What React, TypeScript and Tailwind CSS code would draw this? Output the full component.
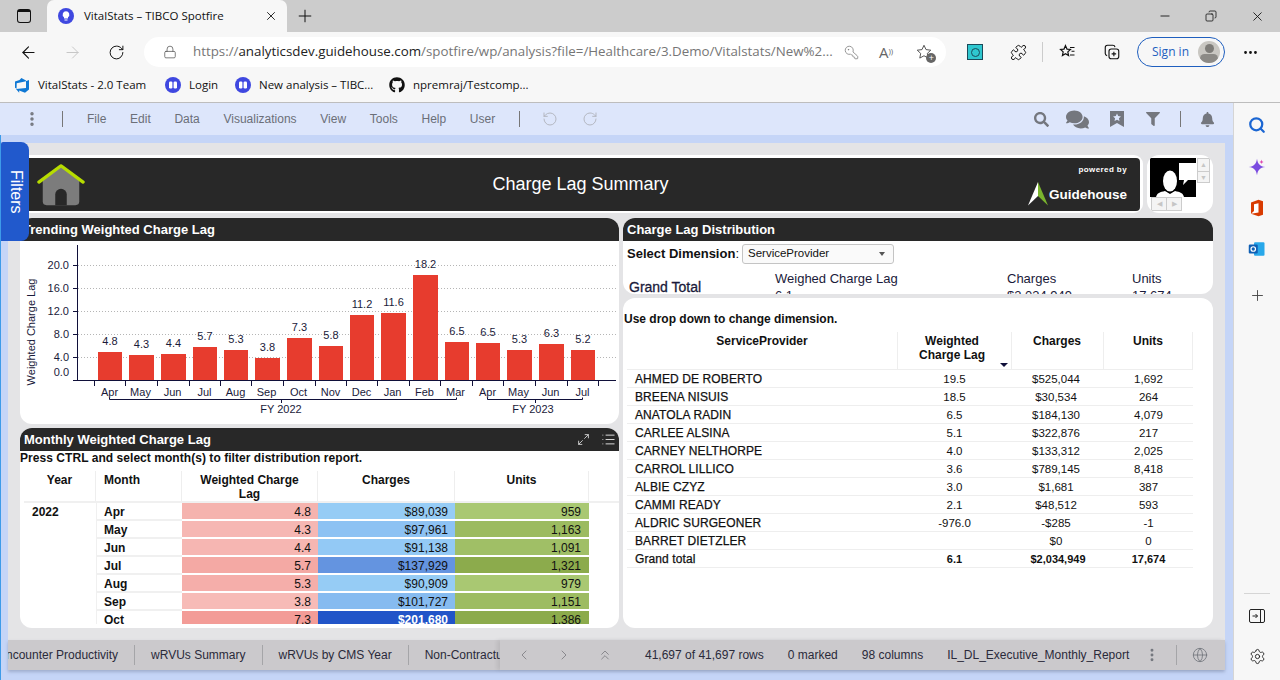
import { ArrowLeft, ArrowRight, ChevronLeft, ChevronRight, ChevronsUp, Ellipsis, EllipsisVertical, Globe, KeyRound, Lock, Maximize2, Minus, Plus, Puzzle, RotateCcw, RotateCw, Search, Settings, Copy, X, List } from "lucide-react";
import { FaGithub, FaSearch, FaFilter, FaBell, FaComments } from "react-icons/fa";

const menus = ["File", "Edit", "Data", "Visualizations", "View", "Tools", "Help", "User"];

const bars = [
  { m: "Apr", v: "4.8", x: 98, w: 24, top: 352, tick: 94.5 },
  { m: "May", v: "4.3", x: 129, w: 25, top: 355, tick: 125.5 },
  { m: "Jun", v: "4.4", x: 161, w: 25, top: 354, tick: 157.5 },
  { m: "Jul", v: "5.7", x: 193, w: 24, top: 347, tick: 189.5 },
  { m: "Aug", v: "5.3", x: 224, w: 24, top: 350, tick: 220.5 },
  { m: "Sep", v: "3.8", x: 255, w: 25, top: 358, tick: 251.5 },
  { m: "Oct", v: "7.3", x: 287, w: 25, top: 338, tick: 283.5 },
  { m: "Nov", v: "5.8", x: 319, w: 24, top: 346, tick: 315.5 },
  { m: "Dec", v: "11.2", x: 350, w: 24, top: 315, tick: 346.5 },
  { m: "Jan", v: "11.6", x: 381, w: 25, top: 313, tick: 377.5 },
  { m: "Feb", v: "18.2", x: 413, w: 25, top: 275, tick: 409.5 },
  { m: "Mar", v: "6.5", x: 445, w: 24, top: 342, tick: 440.5 },
  { m: "Apr", v: "6.5", x: 476, w: 24, top: 343, tick: 472.5 },
  { m: "May", v: "5.3", x: 507, w: 25, top: 350, tick: 503.5 },
  { m: "Jun", v: "6.3", x: 539, w: 25, top: 344, tick: 535.5 },
  { m: "Jul", v: "5.2", x: 571, w: 24, top: 350, tick: 567.5 },
];

const yTicks = [
  { label: "20.0", y: 265 },
  { label: "16.0", y: 288 },
  { label: "12.0", y: 311 },
  { label: "8.0", y: 334 },
  { label: "4.0", y: 357 },
];

const months = [
  { m: "Apr", lag: "4.8", lagBg: "bg-[#f5b3ae]", ch: "$89,039", chBg: "bg-[#96ccf5]", un: "959", unBg: "bg-[#a9c872]" },
  { m: "May", lag: "4.3", lagBg: "bg-[#f6b7b3]", ch: "$97,961", chBg: "bg-[#8dc2f3]", un: "1,163", unBg: "bg-[#9cbb60]" },
  { m: "Jun", lag: "4.4", lagBg: "bg-[#f6b6b2]", ch: "$91,138", chBg: "bg-[#93c9f5]", un: "1,091", unBg: "bg-[#a0bf66]" },
  { m: "Jul", lag: "5.7", lagBg: "bg-[#f4a9a4]", ch: "$137,929", chBg: "bg-[#6494e0]", un: "1,321", unBg: "bg-[#8cab4c]" },
  { m: "Aug", lag: "5.3", lagBg: "bg-[#f5aeaa]", ch: "$90,909", chBg: "bg-[#96ccf5]", un: "979", unBg: "bg-[#a9c872]" },
  { m: "Sep", lag: "3.8", lagBg: "bg-[#f7bbb7]", ch: "$101,727", chBg: "bg-[#86bbf0]", un: "1,151", unBg: "bg-[#9dbc61]" },
  { m: "Oct", lag: "7.3", lagBg: "bg-[#f39c97]", ch: "$201,680", chBg: "bg-[#2154c8] text-white font-bold", un: "1,386", unBg: "bg-[#8cab4c]" },
];

const providers = [
  ["AHMED DE ROBERTO", "19.5", "$525,044", "1,692"],
  ["BREENA NISUIS", "18.5", "$30,534", "264"],
  ["ANATOLA RADIN", "6.5", "$184,130", "4,079"],
  ["CARLEE ALSINA", "5.1", "$322,876", "217"],
  ["CARNEY NELTHORPE", "4.0", "$133,312", "2,025"],
  ["CARROL LILLICO", "3.6", "$789,145", "8,418"],
  ["ALBIE CZYZ", "3.0", "$1,681", "387"],
  ["CAMMI READY", "2.1", "$48,512", "593"],
  ["ALDRIC SURGEONER", "-976.0", "-$285", "-1"],
  ["BARRET DIETZLER", "", "$0", "0"],
];

function SpotfireDot({ className }: { className: string }) {
  return (
    <svg viewBox="0 0 16 16" className={className}>
      <circle cx="8" cy="8" r="8" fill="#3f48e0" />
      <rect x="4" y="4.5" width="3.4" height="7" rx="1.2" fill="#fff" />
      <rect x="8.6" y="4.5" width="3.4" height="7" rx="1.2" fill="#fff" />
    </svg>
  );
}

function Trending() {
  return (
    <svg viewBox="20 241 599 183" className="w-[599px] h-[183px] block">
      {yTicks.map((t) => (
        <g key={t.label}>
          <line x1="78" x2="616" y1={t.y + 0.5} y2={t.y + 0.5} stroke="#b5b5b5" strokeDasharray="1 2" />
          <line x1="73" x2="78" y1={t.y + 0.5} y2={t.y + 0.5} stroke="#10103a" />
          <text x="69" y={t.y + 4} textAnchor="end" fontSize="11" fill="#1a1a3a">{t.label}</text>
        </g>
      ))}
      <text x="69" y="376" textAnchor="end" fontSize="11" fill="#1a1a3a">0.0</text>
      <text transform="translate(35 332) rotate(-90)" textAnchor="middle" fontSize="11" fill="#1a1a3a">Weighted Charge Lag</text>
      {bars.map((b, i) => (
        <g key={i}>
          <rect x={b.x} y={b.top} width={b.w} height={380 - b.top} fill="#e73c2e" />
          <text x={b.x + b.w / 2} y={b.top - 7} textAnchor="middle" fontSize="11" fill="#1a1a3a">{b.v}</text>
          <line x1={b.tick} x2={b.tick} y1="380" y2="386" stroke="#10103a" />
          <text x={b.tick + 15} y="396" textAnchor="middle" fontSize="11" fill="#1a1a3a">{b.m}</text>
        </g>
      ))}
      <line x1="598.5" x2="598.5" y1="380" y2="386" stroke="#10103a" />
      <line x1="77.5" x2="77.5" y1="245" y2="380" stroke="#10103a" />
      <line x1="73" x2="616" y1="380.5" y2="380.5" stroke="#10103a" />
      <path d="M109.5 397.5V399.5H456.5V397.5M281.5 399.5V403M487.5 397.5V399.5H582.5V397.5M535.5 399.5V403" fill="none" stroke="#10103a" />
      <text x="281" y="413" textAnchor="middle" fontSize="11" fill="#1a1a3a">FY 2022</text>
      <text x="533" y="413" textAnchor="middle" fontSize="11" fill="#1a1a3a">FY 2023</text>
    </svg>
  );
}

export default function App() {
  return (
    <div className="w-[1280px] h-[680px] overflow-hidden flex flex-col bg-[#f7f7f7] font-['Liberation_Sans',Arial,sans-serif] text-[#111]">
      {/* Browser tabs */}
      <div className="h-[32px] shrink-0 bg-[#cccccc] flex items-end font-['Open_Sans',sans-serif]">
        <div className="w-[47px] h-[32px] flex items-center justify-center">
          <div className="w-[14px] h-[14px] rounded-[3px] border border-[#111] border-t-[3px]" />
        </div>
        <div className="w-[240px] h-[32px] bg-[#f7f7f7] rounded-t-[7px] flex items-center pl-[11px] pr-[9px]">
          <svg viewBox="0 0 16 16" className="w-[16px] h-[16px] shrink-0">
            <circle cx="8" cy="8" r="8" fill="#3f48e0" />
            <path d="M8 3.2a3.4 3.4 0 0 0-2 6.1V10.6h4V9.3a3.4 3.4 0 0 0-2-6.1zM6.5 11.4h3v1.2h-3z" fill="#fff" />
          </svg>
          <span className="ml-[10px] text-[11.5px] flex-1 whitespace-nowrap">VitalStats – TIBCO Spotfire</span>
          <X size={14} strokeWidth={1.5} />
        </div>
        <div className="w-[36px] h-[32px] flex items-center justify-center">
          <Plus size={20} strokeWidth={1.2} />
        </div>
        <div className="flex-1" />
        <div className="h-[32px] flex items-center">
          <div className="w-[46px] flex justify-center"><Minus size={14} strokeWidth={1.5} /></div>
          <div className="w-[46px] flex justify-center"><Copy size={12} strokeWidth={1.6} className="-scale-x-100" /></div>
          <div className="w-[46px] flex justify-center"><X size={15} strokeWidth={1.4} /></div>
        </div>
      </div>

      {/* Address bar */}
      <div className="h-[36px] shrink-0 flex items-center font-['Open_Sans',sans-serif] pt-[4px]">
        <div className="w-[144px] flex shrink-0 items-center">
          <div className="w-[56px] flex justify-center"><ArrowLeft size={19} strokeWidth={1.4} /></div>
          <div className="w-[32px] flex justify-center"><ArrowRight size={19} strokeWidth={1.2} className="text-[#c4c4c4]" /></div>
          <div className="w-[56px] flex justify-center"><RotateCw size={17} strokeWidth={1.4} /></div>
        </div>
        <div className="w-[802px] h-[30px] bg-white rounded-full flex items-center shrink-0">
          <Lock size={14} strokeWidth={1.3} className="ml-[19px] text-[#555]" />
          <span className="ml-[16px] w-[640px] text-[13.33px] whitespace-nowrap overflow-hidden text-[#767676]">
            https://<span className="text-[#222]">analyticsdev.guidehouse.com</span>/spotfire/wp/analysis?file=/Healthcare/3.Demo/Vitalstats/New%2...
          </span>
          <KeyRound size={15} strokeWidth={1.2} className="ml-[11px] text-[#777] -scale-x-100" />
          <span className="ml-[20px] text-[15px] text-[#666] leading-none">A<sup className="text-[8px]">))</sup></span>
          <span className="ml-[22px] relative w-[18px] h-[18px]">
            <svg viewBox="0 0 24 24" className="w-[18px] h-[18px]" fill="none" stroke="#444" strokeWidth="1.2"><path d="M12 3l2.7 5.8 6.3.8-4.6 4.3 1.2 6.2L12 17l-5.6 3.1 1.2-6.2L3 9.6l6.3-.8z" /></svg>
            <span className="absolute right-[-3px] bottom-[-2px] w-[10px] h-[10px] rounded-full bg-[#666] text-white text-[9px] leading-[9px] text-center">+</span>
          </span>
        </div>
        <div className="flex-1 flex items-center">
          <div className="ml-[21px] w-[16px] h-[16px] bg-[#2fc7cf] border border-[#1b4a5a] flex items-center justify-center">
            <div className="w-[9px] h-[9px] rounded-full border border-[#1b4a5a]" />
          </div>
          <Puzzle size={17} strokeWidth={1.4} className="ml-[27px]" />
          <div className="ml-[15px] w-px h-[20px] bg-[#ccc]" />
          <svg viewBox="0 0 24 24" className="ml-[15px] w-[18px] h-[18px]" fill="none" stroke="#111" strokeWidth="1.6"><path d="M10 3.5l2 4.6 4.6.5-3.5 3.2 1 4.9-4.1-2.5-4.1 2.5 1-4.9L3.4 8.6 8 8.1zM16 6h6M18 11h4M16 16h6" /></svg>
          <svg viewBox="0 0 24 24" className="ml-[27px] w-[18px] h-[18px]" fill="none" stroke="#111" strokeWidth="1.5"><rect x="8" y="8" width="13" height="13" rx="3" /><path d="M14.5 11.5v6M11.5 14.5h6M16 5.5A3 3 0 0 0 13 3H6a3 3 0 0 0-3 3v8a3 3 0 0 0 2.5 2.8" /></svg>
          <div className="ml-[16px] w-[88px] h-[30px] rounded-full border border-[#1f5fbf] flex items-center pl-[14px] pr-[4px] justify-between">
            <span className="text-[12px] text-[#1f5fbf]">Sign in</span>
            <div className="w-[22px] h-[22px] rounded-full bg-[#c9c7c2] flex flex-col items-center overflow-hidden pt-[3px]">
              <div className="w-[9px] h-[10px] rounded-full bg-[#7e7c78]" />
              <div className="w-[18px] h-[10px] rounded-full bg-[#8c8a86] mt-[1px]" />
            </div>
          </div>
          <Ellipsis size={17} className="ml-[17px]" />
        </div>
      </div>

      {/* Bookmarks */}
      <div className="h-[35px] shrink-0 flex items-center border-b border-[#bdbdbd] pl-[14px] text-[11.5px] font-['Open_Sans',sans-serif] whitespace-nowrap">
        <svg viewBox="0 0 16 16" className="w-[16px] h-[16px] shrink-0">
          <path d="M15 3v9.6l-4 3.2-5.8-2.2v2.1L2 12l10-1V3.6L7.4 1 5.5 3 1 4.4v6.4l1.6 1 .1-5.6L11 4.6z" fill="#0f78d4" />
        </svg>
        <span className="ml-[8px] w-[107px]">VitalStats - 2.0 Team</span>
        <SpotfireDot className="ml-[20px] w-[16px] h-[16px] shrink-0" />
        <span className="ml-[8px] w-[29px]">Login</span>
        <SpotfireDot className="ml-[17px] w-[16px] h-[16px] shrink-0" />
        <span className="ml-[8px] w-[114px]">New analysis – TIBC...</span>
        <FaGithub size={16} className="ml-[16px] shrink-0" />
        <span className="ml-[8px]">npremraj/Testcomp...</span>
      </div>

      <div className="flex-1 flex min-h-0">
        {/* Spotfire */}
        <div className="w-[1234px] shrink-0 flex flex-col relative border-r border-[#d5d5d5]">
          <div className="h-[32px] shrink-0 bg-[#dde6fb] flex items-center text-[12px] text-[#6b6f78]">
            <EllipsisVertical size={18} strokeWidth={2.6} className="ml-[23px] text-[#74777e]" />
            <div className="ml-[21px] w-px h-[16px] bg-[#777]" />
            <div className="ml-[24px] flex gap-[23.7px]">
              {menus.map((m) => (
                <span key={m}>{m}</span>
              ))}
            </div>
            <div className="ml-[24px] w-px h-[16px] bg-[#777]" />
            <RotateCcw size={16} strokeWidth={1.4} className="ml-[22px] text-[#b0b4bc]" />
            <RotateCw size={16} strokeWidth={1.4} className="ml-[24px] text-[#b0b4bc]" />
            <div className="flex-1" />
            <FaSearch size={15} className="text-[#74777e]" />
            <FaComments size={23} className="ml-[17px] text-[#74777e]" />
            <svg viewBox="0 0 14 16" className="ml-[21px] w-[14px] h-[16px]">
              <path d="M0 0h14v16l-7-4-7 4z" fill="#74777e" />
              <path d="M7 2.5l1.2 2.6 2.8.3-2.1 1.9.6 2.8L7 8.7l-2.5 1.4.6-2.8L3 5.4l2.8-.3z" fill="#dde6fb" />
            </svg>
            <FaFilter size={14} className="ml-[22px] text-[#74777e]" />
            <div className="ml-[20px] w-px h-[16px] bg-[#777]" />
            <FaBell size={15} className="ml-[19px] mr-[18px] text-[#74777e]" />
          </div>

          <div className="flex-1 bg-[#c5d5f7] pl-[8px] pr-[8px] pt-[8px] border-l border-[#3d9be9]">
            <div className="h-[497px] -ml-px bg-[#e4e4e6] pl-[12px] pt-[12px]">
              <div className="flex gap-[4px]">
                <div className="w-[1123px] h-[58px] bg-white rounded-[9px] p-[3px] pb-[2px] pl-0">
                  <div className="h-[53px] bg-[#282828] rounded-r-[4px] flex items-center relative">
                    <svg viewBox="0 0 50 44" className="ml-[17px] w-[48px] h-[44px] shrink-0">
                      <path d="M6 14L25 -0.5L44 14V36a4 4 0 0 1-4 4H10a4 4 0 0 1-4-4z" fill="#7c7c7c" transform="translate(0 3)" />
                      <path d="M19 43V32a6 6 0 0 1 12 0v11z" fill="#282828" />
                      <path d="M2 19L25 2L48 19" fill="none" stroke="#b7dc00" strokeWidth="3.4" strokeLinecap="round" strokeLinejoin="round" />
                    </svg>
                    <div className="flex-1 text-center text-white text-[18px] pl-[56px]">Charge Lag Summary</div>
                    <div className="w-[120px] h-full shrink-0 pr-[13px] pt-[7px] flex flex-col items-end">
                      <span className="text-white font-bold text-[8px] tracking-[0.4px] leading-[10px]">powered by</span>
                      <div className="flex items-center mt-[7px]">
                        <svg viewBox="0 0 20 24" className="w-[20px] h-[24px]">
                          <path d="M10 0L0 23.5L10 14z" fill="#fff" />
                          <path d="M10 0L20 23.5L10 14z" fill="#7ab42e" />
                        </svg>
                        <span className="text-white font-bold text-[13.5px] ml-[1px] mt-[2px]">Guidehouse</span>
                      </div>
                    </div>
                  </div>
                </div>
                <div className="w-[66px] h-[58px] bg-white rounded-[12px] relative overflow-hidden">
                  <svg viewBox="0 0 46 39" className="absolute left-[3px] top-[3px] w-[46px] h-[39px]">
                    <rect width="46" height="39" fill="#000" />
                    <ellipse cx="20" cy="23" rx="7" ry="10.5" fill="#fff" />
                    <path d="M6 39c1-4 4-5 9-6l5 3 5-3c5 1 8 2 9 6z" fill="#fff" />
                    <path d="M29 5h17v17H38l-5 5 1-5h-5z" fill="#fff" />
                  </svg>
                  <div className="absolute left-[50px] top-[3px] w-[13px] h-[25px] border border-[#ccc] bg-[#f4f4f4] flex flex-col text-[#c6c6c6] text-[7px] leading-[12px] text-center">
                    <span className="border-b border-[#ccc]">▲</span>
                    <span>▼</span>
                  </div>
                  <div className="absolute left-[4px] top-[42px] w-[31px] h-[14px] border border-[#ccc] bg-[#f4f4f4] flex text-[#c6c6c6] text-[7px] leading-[12px] text-center">
                    <span className="flex-1 border-r border-[#ccc]">◀</span>
                    <span className="flex-1">▶</span>
                  </div>
                </div>
              </div>

              <div className="flex gap-[4px] mt-[5px]">
                <div className="w-[599px] flex flex-col gap-[4px]">
                  <div className="h-[206px] bg-white rounded-[12px] overflow-hidden">
                    <div className="h-[23px] bg-[#282828] text-white font-bold text-[13px] leading-[23px] pl-[3px]">Trending Weighted Charge Lag</div>
                    <Trending />
                  </div>

                  <div className="h-[200px] bg-white rounded-[12px] overflow-hidden">
                    <div className="h-[23px] bg-[#282828] text-white font-bold text-[13px] leading-[23px] pl-[4px] flex items-center">
                      <span className="flex-1">Monthly Weighted Charge Lag</span>
                      <Maximize2 size={13} strokeWidth={1.8} className="text-[#c8c8c8] mr-[11px]" />
                      <List size={15} strokeWidth={1.6} className="text-[#d8d8d8] mr-[3px]" />
                    </div>
                    <div className="text-[12px] font-bold tracking-[0.05px] leading-[14px]">Press CTRL and select month(s) to filter distribution report.</div>
                    <div className="ml-[4px] mt-[6px] h-[153px] overflow-hidden text-[12px]">
                      <div className="grid grid-cols-[72px_86px_136px_137px_134px] h-[32px] border-b-2 border-[#f0f0f0] font-bold text-center leading-[14px]">
                        <div className="border-r border-[#eeeeee] pt-[2px]">Year</div>
                        <div className="border-r border-[#eeeeee] pt-[2px] text-left pl-[8px]">Month</div>
                        <div className="border-r border-[#eeeeee] pt-[2px]">Weighted Charge<br />Lag</div>
                        <div className="border-r border-[#eeeeee] pt-[2px]">Charges</div>
                        <div className="border-r border-[#eeeeee] pt-[2px]">Units</div>
                      </div>
                      {months.map((r, i) => (
                        <div key={r.m} className="grid grid-cols-[72px_86px_136px_137px_134px] grid-rows-[18px] h-[18px] leading-[19px]">
                          <div className="font-bold pl-[8px]">{i === 0 ? "2022" : ""}</div>
                          <div className="font-bold pl-[7px] border-b-2 border-l border-[#f0f0f0]">{r.m}</div>
                          <div className={`${r.lagBg} border-b-2 border-white text-right pr-[7px]`}>{r.lag}</div>
                          <div className={`${r.chBg} border-b-2 border-white text-right pr-[7px]`}>{r.ch}</div>
                          <div className={`${r.unBg} border-b-2 border-white text-right pr-[8px]`}>{r.un}</div>
                        </div>
                      ))}
                    </div>
                  </div>
                </div>

                <div className="w-[590px] flex flex-col gap-[4px]">
                  <div className="h-[76px] bg-white rounded-[12px] overflow-hidden">
                    <div className="h-[23px] bg-[#282828] text-white font-bold text-[13px] leading-[23px] pl-[4px]">Charge Lag Distribution</div>
                    <div className="flex items-center pl-[4px] pt-[3px] text-[13px]">
                      <span className="font-bold">Select Dimension</span>:
                      <div className="ml-[3px] w-[152px] h-[20px] border border-[#c4c4c4] rounded-[3px] bg-[#fafafa] text-[11.5px] flex items-center justify-between pl-[5px] pr-[8px]">
                        <span>ServiceProvider</span>
                        <span className="w-0 h-0 border-x-[3px] border-x-transparent border-t-[4px] border-t-[#555]" />
                      </div>
                    </div>
                    <div className="grid grid-cols-[146px_232px_125px_70px] pl-[6px] text-[13px] mt-[6px] leading-[17px] text-[#1a1a3a]">
                      <div className="pt-[9px] text-[14px] [-webkit-text-stroke:0.3px_#1a1a3a]">Grand Total</div>
                      <div>Weighed Charge Lag<br />6.1</div>
                      <div>Charges<br />$2,034,949</div>
                      <div>Units<br />17,674</div>
                    </div>
                  </div>

                  <div className="h-[330px] bg-white rounded-[12px] text-[12px] overflow-hidden">
                    <div className="font-bold pt-[14px] leading-[14px] pl-[1px]">Use drop down to change dimension.</div>
                    <div className="ml-[4px] mt-[6px] w-[566px]">
                      <div className="grid grid-cols-[271px_114px_92px_89px] h-[38px] border-b border-[#eeeeee] font-bold text-center leading-[14px]">
                        <div className="border-r border-[#eeeeee] pt-[2px]">ServiceProvider</div>
                        <div className="border-r border-[#eeeeee] pt-[2px] pr-[5px] relative">Weighted<br />Charge Lag
                          <span className="absolute right-[3px] bottom-[2px] w-0 h-0 border-x-[4px] border-x-transparent border-t-[4px] border-t-[#10103a]" />
                        </div>
                        <div className="border-r border-[#eeeeee] pt-[2px] pr-[1px]">Charges</div>
                        <div className="border-r border-[#eeeeee] pt-[2px]">Units</div>
                      </div>
                      {providers.map((p) => (
                        <div key={p[0]} className="grid grid-cols-[271px_114px_92px_89px] h-[18px] border-b border-[#eeeeee] leading-[19px] text-center text-[11.5px]">
                          <div className="text-left pl-[8px] text-[12px] tracking-[0.1px] [-webkit-text-stroke:0.25px_#111]">{p[0]}</div>
                          <div className="pr-[1px]">{p[1]}</div>
                          <div className="pr-[4px]">{p[2]}</div>
                          <div>{p[3]}</div>
                        </div>
                      ))}
                      <div className="grid grid-cols-[271px_114px_92px_89px] h-[18px] border-b border-[#eeeeee] leading-[19px] text-center font-bold text-[11px]">
                        <div className="text-left pl-[8px] text-[12px] font-normal tracking-[0.1px] [-webkit-text-stroke:0.25px_#111]">Grand total</div>
                        <div className="pr-[1px]">6.1</div>
                        <div>$2,034,949</div>
                        <div>17,674</div>
                      </div>
                    </div>
                  </div>
                </div>
              </div>
            </div>

            {/* Status bar */}
            <div className="h-[30px] -ml-px bg-[#cbc9cc] shadow-[0_2px_3px_rgba(90,100,130,0.35)] flex items-center text-[12px] text-[#2a2a3a] whitespace-nowrap">
              <div className="w-[492px] h-full overflow-hidden flex items-center shrink-0">
                <span className="-ml-[10px]">Encounter Productivity</span>
                <div className="ml-[16px] w-px h-[20px] bg-[#a5a5a8] shrink-0" />
                <span className="ml-[16px]">wRVUs Summary</span>
                <div className="ml-[16px] w-px h-[20px] bg-[#a5a5a8] shrink-0" />
                <span className="ml-[16px]">wRVUs by CMS Year</span>
                <div className="ml-[16px] w-px h-[20px] bg-[#a5a5a8] shrink-0" />
                <span className="ml-[16px]">Non-Contractual</span>
              </div>
              <div className="flex-1 h-full flex items-center shadow-[-3px_0_4px_rgba(0,0,0,0.08)]">
                <ChevronLeft size={16} strokeWidth={1.2} className="ml-[16px] text-[#77777c]" />
                <ChevronRight size={16} strokeWidth={1.2} className="ml-[24px] text-[#77777c]" />
                <ChevronsUp size={16} strokeWidth={1.2} className="ml-[25px] text-[#77777c]" />
                <span className="ml-[32px]">41,697 of 41,697 rows</span>
                <span className="ml-[24px]">0 marked</span>
                <span className="ml-[24px]">98 columns</span>
                <span className="ml-[24px]">IL_DL_Executive_Monthly_Report</span>
                <EllipsisVertical size={16} strokeWidth={2.4} className="ml-[15px] text-[#74777e]" />
                <div className="ml-[16px] w-px h-[20px] bg-[#a5a5a8]" />
                <Globe size={16} strokeWidth={1.3} className="ml-[15px] text-[#74777e]" />
              </div>
            </div>
          </div>

          <div className="absolute left-[1px] top-[39px] w-[28px] h-[99px] bg-[#2159cc] rounded-r-[8px] rounded-tl-[2px] flex items-center justify-center">
            <span className="[writing-mode:vertical-rl] text-white text-[16px] ml-[1px]">Filters</span>
          </div>
        </div>

        {/* Edge sidebar */}
        <div className="flex-1 flex flex-col items-center pt-[13px]">
          <Search size={18} strokeWidth={3} className="text-[#1b66d2]" />
          <svg viewBox="0 0 24 24" className="mt-[24px] w-[18px] h-[18px]">
            <path d="M12 1c1 7 4 10 11 11-7 1-10 4-11 11-1-7-4-10-11-11 7-1 10-4 11-11z" fill="#7a4be0" />
            <path d="M18 2c.3 2 1.2 3 3 3.3-1.8.3-2.7 1.2-3 3-.3-1.8-1.2-2.7-3-3 1.8-.3 2.7-1.3 3-3.3z" fill="#e14bb0" />
          </svg>
          <svg viewBox="0 0 24 24" className="mt-[23px] w-[18px] h-[18px]">
            <path d="M14 1L4 4.5v15L14 23l6-2V3z" fill="#d83b01" />
            <path d="M14 5.5L8 7v9l-4 3.5L14 18z" fill="#fff" />
          </svg>
          <svg viewBox="0 0 24 24" className="mt-[23px] w-[18px] h-[18px]">
            <rect x="8" y="3" width="14" height="18" rx="1.5" fill="#28a8ea" />
            <rect x="1" y="6" width="12" height="12" rx="1.5" fill="#0f5fb4" />
            <circle cx="7" cy="12" r="3" fill="none" stroke="#fff" strokeWidth="1.6" />
          </svg>
          <Plus size={17} strokeWidth={1.3} className="mt-[29px] text-[#444]" />
          <div className="flex-1" />
          <div className="w-[26px] h-px bg-[#d5d5d5] mb-[14px]" />
          <svg viewBox="0 0 16 16" className="w-[16px] h-[16px] mb-[24px]" fill="none" stroke="#222" strokeWidth="1">
            <rect x="0.5" y="1.5" width="15" height="13" rx="1.5" />
            <path d="M11.5 1.5v13M3.5 8h5M6.5 6l2 2-2 2" />
          </svg>
          <Settings size={17} strokeWidth={1.3} className="text-[#222] mb-[15px]" />
        </div>
      </div>
    </div>
  );
}
